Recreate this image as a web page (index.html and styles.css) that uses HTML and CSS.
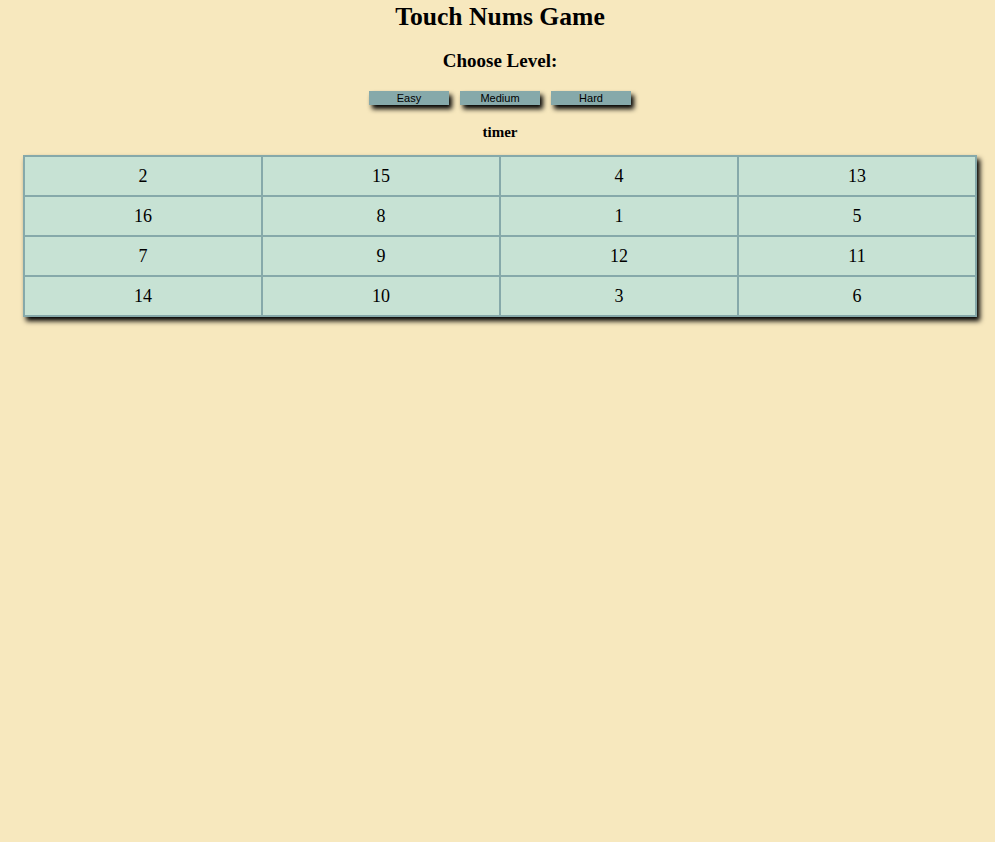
FILE: index.html
```html
<!DOCTYPE html>
<html>
<head>
<meta charset="utf-8">
<title>Touch Nums Game</title>
<link rel="stylesheet" href="styles.css">
</head>
<body>
<h1 class="title">Touch Nums Game</h1>
<h2 class="subtitle">Choose Level:</h2>
<div class="levels">
  <button class="level">Easy</button>
  <button class="level">Medium</button>
  <button class="level">Hard</button>
</div>
<div class="timer">timer</div>
<div class="board-wrap">
<table class="board">
  <tr><td>2</td><td>15</td><td>4</td><td>13</td></tr>
  <tr><td>16</td><td>8</td><td>1</td><td>5</td></tr>
  <tr><td>7</td><td>9</td><td>12</td><td>11</td></tr>
  <tr><td>14</td><td>10</td><td>3</td><td>6</td></tr>
</table>
</div>
</body>
</html>
```
FILE: styles.css
```css
html {
  margin: 0;
  padding: 0;
  background: #f7e8be;
  min-height: 100%;
}
body {
  margin: 0;
  font-family: "Liberation Serif", "Times New Roman", serif;
  color: #000;
  text-align: center;
  padding: 2px 0 40px 5px;
  background: #f7e8be;
}
.title {
  font-size: 25.6px;
  line-height: 30px;
  margin: 0;
  font-weight: bold;
}
.subtitle {
  font-size: 19px;
  line-height: 22px;
  margin: 18px 0 0;
  font-weight: bold;
}
.levels {
  display: flex;
  justify-content: center;
  gap: 11px;
  margin-top: 19px;
}
.level {
  width: 80px;
  height: 14px;
  padding: 0;
  border: none;
  background: #86a9aa;
  font-family: "Liberation Sans", Arial, sans-serif;
  font-size: 11px;
  line-height: 14px;
  color: #000;
  box-shadow: 3px 4px 5px #000;
}
.timer {
  font-weight: bold;
  font-size: 15px;
  line-height: 18px;
  margin-top: 18px;
}
.board-wrap {
  width: 954px;
  margin: 14px 0 0 18px;
  box-shadow: 3px 4px 5px #000;
}
.board {
  width: 100%;
  border-collapse: collapse;
  background: #c7e2d4;
  table-layout: fixed;
}
.board td {
  border: 2px solid #86a9aa;
  height: 38px;
  padding: 0;
  font-size: 18px;
  text-align: center;
  vertical-align: middle;
}
```
